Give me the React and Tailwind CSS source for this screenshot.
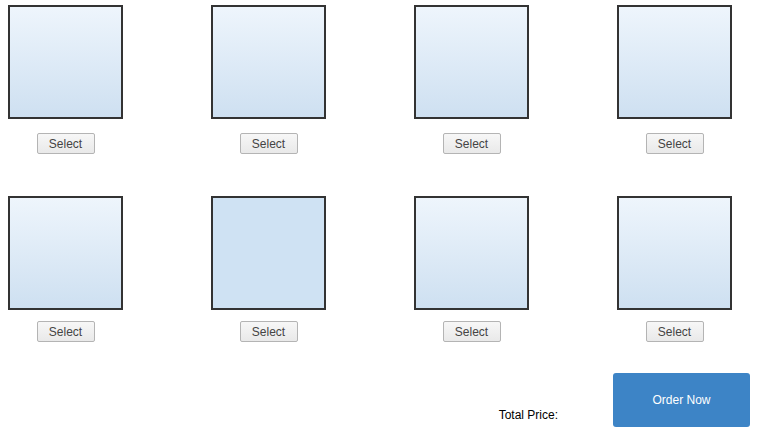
import { useState } from 'react';

const rows = [
  [{ id: 1 }, { id: 2 }, { id: 3 }, { id: 4 }],
  [{ id: 5 }, { id: 6, selected: true }, { id: 7 }, { id: 8 }],
];

function Tile({ item, gapClass, onSelect }) {
  return (
    <div className="flex flex-col items-center w-[115px]">
      <div
        className={
          item.selected
            ? 'w-[115px] h-[114px] border-2 border-[#333] bg-[#cfe2f3]'
            : 'w-[115px] h-[114px] border-2 border-[#333] bg-gradient-to-b from-[#eef5fc] to-[#cee0f1]'
        }
      />
      <button
        onClick={() => onSelect(item.id)}
        className={`${gapClass} w-[58px] h-[21px] border border-[#b4b4b4] rounded-[2px] bg-gradient-to-b from-[#f7f7f7] to-[#e9e9e9] text-[12px] text-[#444] leading-none`}
      >
        Select
      </button>
    </div>
  );
}

export default function App() {
  const [selected, setSelected] = useState(6);

  return (
    <div className="w-[758px] h-[430px] bg-white font-['Liberation_Sans',Arial,sans-serif] pt-[5px]">
      {rows.map((row, i) => (
        <div key={i} className={`flex gap-[88px] pl-[8px] ${i === 1 ? 'mt-[42px]' : ''}`}>
          {row.map(item => (
            <Tile
              key={item.id}
              item={{ ...item, selected: item.id === selected }}
              gapClass={i === 0 ? 'mt-[14px]' : 'mt-[11px]'}
              onSelect={setSelected}
            />
          ))}
        </div>
      ))}

      <div className="flex justify-end items-end pr-[8px] mt-[31px]">
        <span className="text-[12px] text-black mr-[55px] mb-[3px]">Total Price:</span>
        <button className="w-[137px] h-[54px] rounded-[3px] bg-[#3d84c6] text-white text-[12px]">
          Order Now
        </button>
      </div>
    </div>
  );
}
